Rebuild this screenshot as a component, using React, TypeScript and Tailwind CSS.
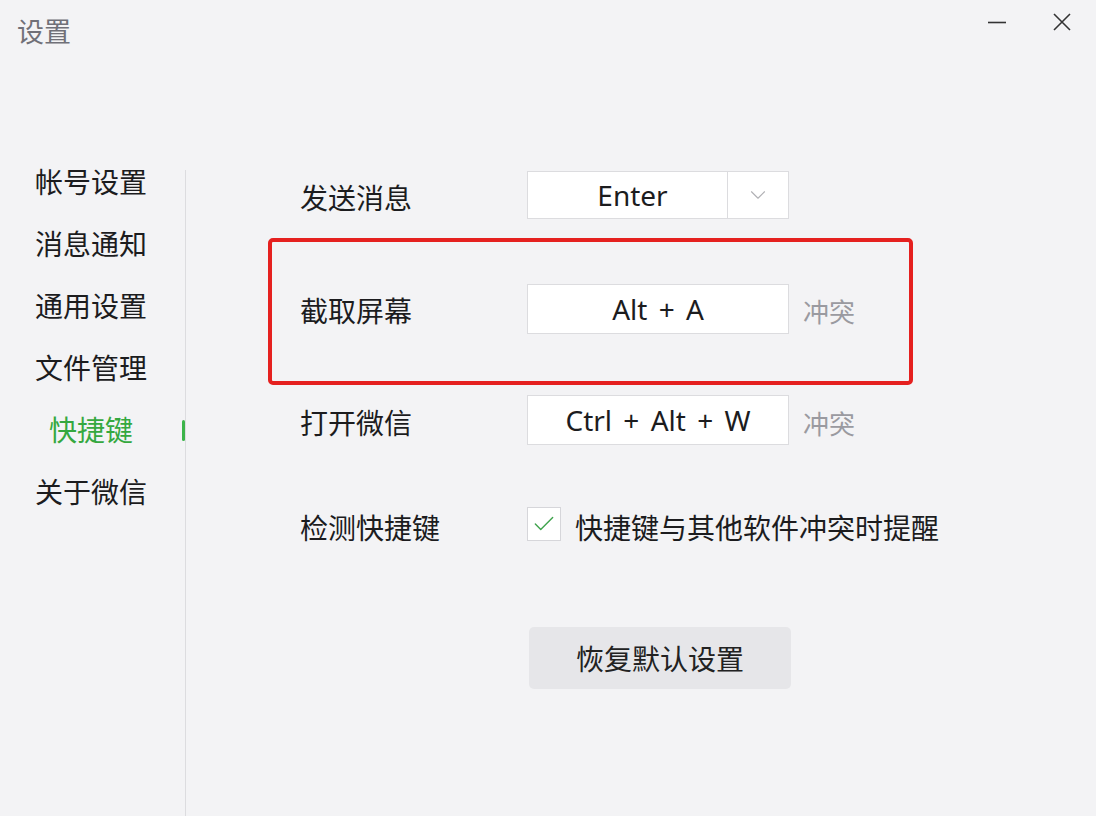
import { Check, ChevronDown } from "lucide-react"

const cjk = "font-['Noto_Sans_CJK_SC',sans-serif]"
const latin = "font-['Noto_Sans','Noto_Sans_CJK_SC',sans-serif] [word-spacing:4px]"

export default function App() {
  const menu = ["帐号设置", "消息通知", "通用设置", "文件管理", "快捷键", "关于微信"]
  const active = "快捷键"

  return (
    <div className={`w-[1096px] h-[816px] bg-[#f3f3f5] flex flex-col overflow-hidden text-[#1c1c1e] ${cjk}`}>
      {/* Title bar */}
      <div className="h-[152px] flex justify-between items-start">
        <div className="pl-[17px] pt-[17px] text-[27px] leading-[28px] text-[#707078]">设置</div>
        <div className="flex items-center gap-[47px] pt-[13px] pr-[25px]">
          <svg width="18" height="18" viewBox="0 0 18 18" className="text-[#333]">
            <path d="M0 9.5 H18" stroke="currentColor" strokeWidth="1.6" />
          </svg>
          <svg width="18" height="18" viewBox="0 0 18 18" className="text-[#333]">
            <path d="M1 1 L17 17 M17 1 L1 17" stroke="currentColor" strokeWidth="1.6" />
          </svg>
        </div>
      </div>

      <div className="flex-1 flex">
        {/* Sidebar */}
        <div className="w-[185px] flex flex-col -mt-[2px]">
          {menu.map((item) => (
            <div key={item} className="h-[62px] flex items-center">
              <div
                className={`flex-1 text-center text-[28px] leading-[62px] ${
                  item === active ? "text-[#35a83f]" : "text-[#1c1c1e]"
                }`}
              >
                {item}
              </div>
              <div className={`w-[3px] h-[21px] mt-[2px] rounded-sm ${item === active ? "bg-[#3cb44a]" : ""}`} />
            </div>
          ))}
        </div>
        <div className="w-[3px] flex">
          <div className="mt-[18px] w-px bg-[#dcdcdf]" />
        </div>

        {/* Main */}
        <div className="flex-1 pl-[112px] pt-[19px] flex flex-col">
          <div className="flex items-center h-[48px]">
            <div className="w-[227px] text-[28px] pt-[3px]">发送消息</div>
            <div className="w-[262px] h-[48px] flex bg-white border border-[#dcdcdf]">
              <div className={`flex-1 flex items-center justify-center text-[28px] pl-[10px] ${latin}`}>Enter</div>
              <div className="w-[61px] border-l border-[#dcdcdf] flex items-center justify-center">
                <ChevronDown className="w-[26px] h-[26px] text-[#b0b0b4]" strokeWidth={1} />
              </div>
            </div>
          </div>

          <div className="mt-[19px] -ml-[32px] w-[645px] h-[147px] border-[4px] border-[#e5201f] rounded-[5px] pl-[28px] flex items-center pb-[6px]">
            <div className="w-[227px] text-[28px] pt-[3px]">截取屏幕</div>
            <div className={`w-[262px] h-[50px] bg-white border border-[#dcdcdf] flex items-center justify-center text-[28px] ${latin}`}>
              Alt + A
            </div>
            <div className="ml-[14px] text-[26px] text-[#9a9aa0] pt-[4px]">冲突</div>
          </div>

          <div className="mt-[10px] flex items-center h-[50px]">
            <div className="w-[227px] text-[28px] pt-[3px]">打开微信</div>
            <div className={`w-[262px] h-[50px] bg-white border border-[#dcdcdf] flex items-center justify-center text-[28px] ${latin}`}>
              Ctrl + Alt + W
            </div>
            <div className="ml-[14px] text-[26px] text-[#9a9aa0] pt-[4px]">冲突</div>
          </div>

          <div className="mt-[62px] flex items-center h-[34px]">
            <div className="w-[227px] text-[28px] pt-[6px]">检测快捷键</div>
            <div className="w-[34px] h-[34px] bg-white border border-[#d6d6da] flex items-center justify-center">
              <Check className="w-[26px] h-[26px] text-[#3fa34d]" strokeWidth={1.3} />
            </div>
            <div className="ml-[14px] text-[28px] pt-[6px]">快捷键与其他软件冲突时提醒</div>
          </div>

          <div className="mt-[86px] ml-[229px] w-[262px] h-[62px] rounded-[5px] bg-[#e6e6e9] flex items-center justify-center text-[28px] text-[#222]">
            恢复默认设置
          </div>
        </div>
      </div>
    </div>
  )
}
